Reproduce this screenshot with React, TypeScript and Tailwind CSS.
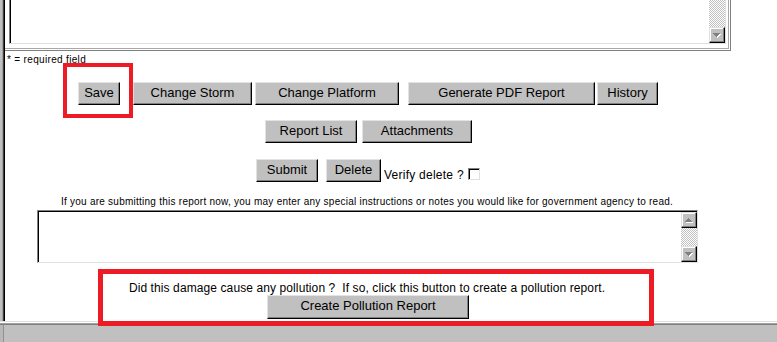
import React from "react";

const checker =
  "bg-[image:repeating-conic-gradient(#c0c0c0_0%_25%,#ffffff_0%_50%)] bg-[length:2px_2px]";

function Arrow({ up }: { up?: boolean }) {
  const rows = up
    ? [
        [6, 5, 1],
        [5, 6, 3],
        [4, 7, 5],
        [3, 8, 7],
      ]
    : [
        [3, 5, 7],
        [4, 6, 5],
        [5, 7, 3],
        [6, 8, 1],
      ];
  return (
    <svg width="14" height="14" viewBox="0 0 14 14" shapeRendering="crispEdges">
      {rows.map(([x, y, w], i) => (
        <rect key={"w" + i} x={x + 1} y={y + 1} width={w} height={1} fill="#ffffff" />
      ))}
      {rows.map(([x, y, w], i) => (
        <rect key={"g" + i} x={x} y={y} width={w} height={1} fill="#808080" />
      ))}
    </svg>
  );
}

function ScrollBtn({ up }: { up?: boolean }) {
  return (
    <div className="w-[16px] h-[16px] shrink-0 bg-[#c0c0c0] border border-t-[#e0e0e0] border-l-[#e0e0e0] border-r-black border-b-black shadow-[inset_-1px_-1px_0_#808080,inset_1px_1px_0_#ffffff] flex items-center justify-center">
      <Arrow up={up} />
    </div>
  );
}

function Btn({ className, children }: { className: string; children: React.ReactNode }) {
  return (
    <button
      type="button"
      className={
        "flex items-center justify-center pb-[3px] bg-[#c0c0c0] border border-t-[#e3e3e3] border-l-[#e3e3e3] border-r-black border-b-black shadow-[inset_-1px_-1px_0_#808080] text-[13px] leading-[15px] text-black whitespace-nowrap font-['Liberation_Sans',Arial,sans-serif] " +
        className
      }
    >
      {children}
    </button>
  );
}

export default function App() {
  return (
    <div className="relative w-[777px] h-[342px] overflow-hidden bg-white text-black font-['Liberation_Sans',Arial,sans-serif] flex flex-col">
      {/* main area */}
      <div className="flex-1 flex min-h-0">
        <div className="w-[2px] bg-[#c0c0c0]" />
        <div className="w-px bg-[#a0a0a0]" />
        <div className="w-px bg-[#404040]" />
        <div className="w-px bg-black" />
        <div className="w-[724px] flex flex-col">
          {/* top text area box */}
          <div className="w-[726px] h-[51px] shrink-0 border-r border-b border-[#808080] pr-px pb-px">
            <div className="h-full border-r border-b border-[#a8a8a8] pl-[4px]">
              <div className="w-[717px] h-[44px] border-l border-l-[#808080] border-r border-b border-r-[#e0e0e0] border-b-[#e0e0e0]">
                <div className="h-full flex border-l border-black">
                  <div className="flex-1" />
                  <div className="w-[16px] flex flex-col">
                    <div className={"flex-1 " + checker} />
                    <ScrollBtn />
                  </div>
                </div>
              </div>
            </div>
          </div>

          <div className="mt-[3px] pl-[2px] text-[10px] leading-[12px] tracking-[0.33px]">* = required field</div>

          {/* row 1 */}
          <div className="mt-[16px] flex pl-[73px]">
            <Btn className="w-[42px] h-[23px]">Save</Btn>
            <Btn className="ml-[13px] w-[119px] h-[23px]">Change Storm</Btn>
            <Btn className="ml-[3px] w-[144px] h-[23px]">Change Platform</Btn>
            <Btn className="ml-[9px] w-[187px] h-[23px]">Generate PDF Report</Btn>
            <Btn className="ml-[2px] w-[61px] h-[23px]">History</Btn>
          </div>

          {/* row 2 */}
          <div className="mt-[15px] flex pl-[260px]">
            <Btn className="w-[92px] h-[23px]">Report List</Btn>
            <Btn className="ml-[5px] w-[110px] h-[23px]">Attachments</Btn>
          </div>

          {/* row 3 */}
          <div className="mt-[16px] flex items-end pl-[251px]">
            <Btn className="w-[62px] h-[23px]">Submit</Btn>
            <Btn className="ml-[8px] w-[55px] h-[23px]">Delete</Btn>
            <span className="ml-[3px] text-[12px] leading-[14px] tracking-[0.25px] whitespace-nowrap">Verify delete ?</span>
            <div className="ml-[4px] mb-[2px] w-[12px] h-[12px] bg-white border border-t-[#808080] border-l-[#808080] border-r-[#e0e0e0] border-b-[#e0e0e0] shadow-[inset_1px_1px_0_#000]" />
          </div>

          <div className="mt-[14px] w-[724px] text-center text-[10px] leading-[12px] tracking-[0.25px] whitespace-nowrap">
            If you are submitting this report now, you may enter any special instructions or notes you would like for government agency to read.
          </div>

          {/* second text area */}
          <div className="mt-[2px] ml-[32px] w-[661px] h-[53px] border-t border-l border-t-[#808080] border-l-[#808080] border-r border-b border-r-[#e0e0e0] border-b-[#e0e0e0]">
            <div className="h-full flex border-t border-l border-black">
              <div className="flex-1" />
              <div className="w-[16px] flex flex-col">
                <ScrollBtn up />
                <div className={"flex-1 " + checker} />
                <ScrollBtn />
              </div>
            </div>
          </div>

          <div className="mt-[18px] w-[724px] text-center text-[12px] leading-[14px] tracking-[0.1px] whitespace-nowrap">
            Did this damage cause any pollution ?{"\u00a0"} If so, click this button to create a pollution report.
          </div>
          <div className="flex pl-[262px]">
            <Btn className="w-[202px] h-[24px]">Create Pollution Report</Btn>
          </div>
        </div>
      </div>

      {/* bottom bar */}
      <div className="h-[21px] shrink-0 flex flex-col">
        <div className="h-px bg-[#e0e0e0]" />
        <div className="h-px bg-white" />
        <div className="h-px bg-[#a0a0a0]" />
        <div className="h-px bg-[#808080]" />
        <div className="flex-1 flex bg-[#c0c0c0]">
          <div className="w-[3px] bg-[#b8b8b8]" />
          <div className="w-px bg-[#909090]" />
        </div>
      </div>

      {/* annotation overlays */}
      <div className="absolute left-[63px] top-[63px] w-[70px] h-[55px] border-4 border-[#ed1c24] pointer-events-none" />
      <div className="absolute left-[98px] top-[269px] w-[556px] h-[57px] border-[5px] border-[#ed1c24] pointer-events-none" />
    </div>
  );
}
